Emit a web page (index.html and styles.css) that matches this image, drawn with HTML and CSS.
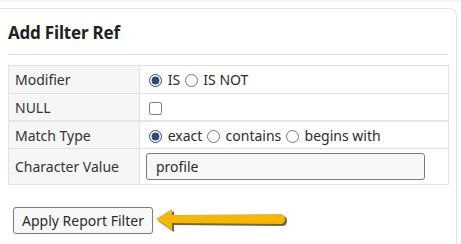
FILE: index.html
```html
<!DOCTYPE html>
<html lang="en">
<head>
  <meta charset="UTF-8" />
  <title>Add Filter Ref</title>
  <link rel="stylesheet" href="styles.css">
</head>
<body>
  <div class="topbar"></div>

  <div class="card">
    <h2>Add Filter Ref</h2>
    <hr />

    <table class="filter-table">
      <tr class="row-mod">
        <th>Modifier</th>
        <td>
          <label><input type="radio" name="mod" checked /> IS</label>
          <label><input type="radio" name="mod" /> IS NOT</label>
        </td>
      </tr>
      <tr class="row-null">
        <th>NULL</th>
        <td><input type="checkbox" /></td>
      </tr>
      <tr class="row-match">
        <th>Match Type</th>
        <td>
          <label><input type="radio" name="match" checked /> exact</label>
          <label><input type="radio" name="match" /> contains</label>
          <label><input type="radio" name="match" /> begins with</label>
        </td>
      </tr>
      <tr class="row-value">
        <th>Character Value</th>
        <td><input type="text" class="text-input" value="profile" /></td>
      </tr>
    </table>

    <div class="actions">
      <button class="apply-btn">Apply Report Filter</button>
      <svg class="arrow" width="136" height="30" viewBox="0 0 136 30">
        <g transform="translate(2,2)">
          <path d="M2 13 L18 3 L18 9 L126 8 Q131 8 131 13 Q131 18 126 18 L18 17 L18 24 Z" fill="#333" opacity="0.75"/>
        </g>
        <path d="M2 13 L18 3 L18 9 L126 8 Q131 8 131 13 Q131 18 126 18 L18 17 L18 24 Z" fill="#f5b700"/>
      </svg>
    </div>
  </div>
</body>
</html>
```

FILE: styles.css
```css
body {
  margin: 0;
  font-family: "Noto Sans", "Open Sans", sans-serif;
  font-size: 14px;
  color: #2b2b2b;
  background: #fff;
}
.topbar {
  height: 2px;
  background: #f2f4f7;
}
.card {
  margin: 6px 4px 0 0;
  height: 250px;
  border: 1px solid #dde4ee;
  border-left: none;
  border-radius: 0 8px 0 0;
  padding: 0 8px 0 8px;
}
.card h2 {
  margin: 0;
  padding-top: 12px;
  font-size: 17px;
  font-weight: 700;
  color: #222;
  line-height: 24px;
  letter-spacing: -0.2px;
}
.card hr {
  border: none;
  border-top: 1px solid #dde4ee;
  margin: 9px 0 10px 0;
}
.filter-table {
  width: 441px;
  border-collapse: collapse;
}
.filter-table th,
.filter-table td {
  border: 1px solid #e2e2e2;
  padding: 0 6px;
  text-align: left;
  font-weight: normal;
  white-space: nowrap;
}
.filter-table th {
  width: 118px;
  background: #f6f6f6;
  color: #333;
}
.filter-table td {
  padding-left: 9px;
}
.row-mod th, .row-mod td { height: 27px; }
.row-null th, .row-null td { height: 26px; }
.row-match th, .row-match td { height: 26px; border-top: 2px solid #e6e6e6; }
.row-value th, .row-value td { height: 35px; }
.filter-table label {
  margin-right: 1px;
}
.filter-table input[type="radio"] {
  width: 13px;
  height: 13px;
  margin: 0 2px 0 0;
  vertical-align: -2px;
  accent-color: #2c4a7e;
}
.filter-table input[type="checkbox"] {
  width: 13px;
  height: 13px;
  margin: 0;
  vertical-align: -2px;
}
.text-input {
  width: 279px;
  height: 27px;
  box-sizing: border-box;
  border: 1px solid #7a7a80;
  border-radius: 3px;
  background: #f8f8f8;
  padding: 0 9px;
  font-family: inherit;
  font-size: 14px;
  color: #2b2b2b;
  margin-left: -3px;
}
.actions {
  display: flex;
  align-items: center;
  margin-top: 19px;
  padding-left: 5px;
}
.apply-btn {
  height: 27px;
  padding: 0 8px;
  border: 1px solid #7a7a80;
  border-radius: 3px;
  background: #f8f8f8;
  font-family: inherit;
  font-size: 14px;
  color: #2b2b2b;
}
.arrow {
  margin-left: 1px;
  margin-top: 2px;
}
```
